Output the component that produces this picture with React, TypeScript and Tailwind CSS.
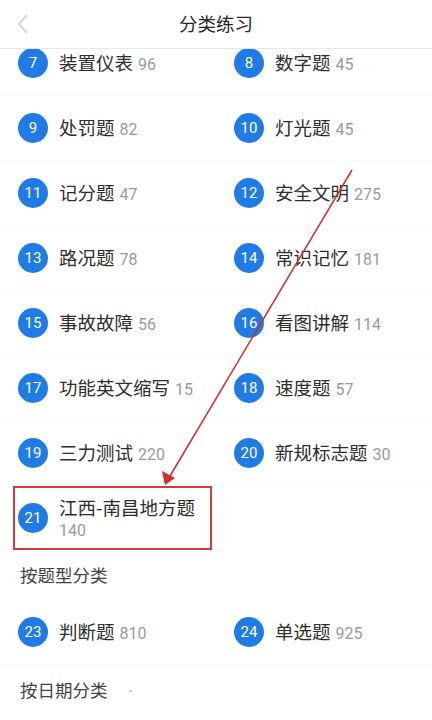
import React from 'react';

type Item = { n: number; name: string; count: number };

const rows: [Item, Item | null][] = [
  [{ n: 7, name: '装置仪表', count: 96 }, { n: 8, name: '数字题', count: 45 }],
  [{ n: 9, name: '处罚题', count: 82 }, { n: 10, name: '灯光题', count: 45 }],
  [{ n: 11, name: '记分题', count: 47 }, { n: 12, name: '安全文明', count: 275 }],
  [{ n: 13, name: '路况题', count: 78 }, { n: 14, name: '常识记忆', count: 181 }],
  [{ n: 15, name: '事故故障', count: 56 }, { n: 16, name: '看图讲解', count: 114 }],
  [{ n: 17, name: '功能英文缩写', count: 15 }, { n: 18, name: '速度题', count: 57 }],
  [{ n: 19, name: '三力测试', count: 220 }, { n: 20, name: '新规标志题', count: 30 }],
];

const Badge: React.FC<{ n: number }> = ({ n }) => (
  <div className="w-[30px] h-[30px] shrink-0 rounded-full bg-[#1f7be6] text-white flex items-center justify-center text-[15px] font-['Roboto',sans-serif]">
    {n}
  </div>
);

const Cell: React.FC<{ item: Item }> = ({ item }) => (
  <div className="flex items-center gap-[11px] pl-[18px]">
    <Badge n={item.n} />
    <div className="flex items-baseline gap-[5px]">
      <span className="text-[18.5px] text-[#2e2e2e]">{item.name}</span>
      <span className="text-[16px] text-[#9a9a9a] font-['Roboto',sans-serif]">{item.count}</span>
    </div>
  </div>
);

export default function App() {
  return (
    <div className="relative w-[432px] h-[720px] overflow-hidden bg-white font-['Noto_Sans_CJK_SC',sans-serif]">
      <header className="relative z-10 h-[49px] flex items-center justify-center bg-white border-b border-[#e8e8e8]">
        <svg className="absolute left-[17px] top-[14px]" width="12" height="20" viewBox="0 0 12 20">
          <path d="M10 1 L2 10 L10 19" fill="none" stroke="#cccccc" strokeWidth="1.5" />
        </svg>
        <h1 className="text-[18.5px] text-[#262626]">分类练习</h1>
      </header>

      <div className="-mt-[18px]">
        {rows.map(([l, r], i) => (
          <div key={i} className="grid grid-cols-2 h-[65px] items-center border-b border-[#fafafa]">
            <Cell item={l} />
            {r ? <Cell item={r} /> : <div />}
          </div>
        ))}

        <div className="h-[64px] flex">
          <div className="ml-[13px] w-[199px] border-2 border-[#d4393b] flex items-center gap-[11px] pl-[3px]">
            <Badge n={21} />
            <div className="flex flex-col leading-[23px] pt-[2px]">
              <span className="text-[18.5px] text-[#2e2e2e]">江西-南昌地方题</span>
              <span className="text-[16px] text-[#9a9a9a] font-['Roboto',sans-serif]">140</span>
            </div>
          </div>
        </div>

        <div className="h-[50px] flex items-center pl-[20px] text-[17.5px] text-[#444]">按题型分类</div>

        <div className="grid grid-cols-2 h-[65px] items-center border-b border-[#f8f8f8]">
          <Cell item={{ n: 23, name: '判断题', count: 810 }} />
          <Cell item={{ n: 24, name: '单选题', count: 925 }} />
        </div>

        <div className="h-[50px] flex items-center pl-[20px] text-[17.5px] text-[#444]">
          按日期分类
          <span className="ml-[18px] text-[#bbb] text-[10px]">·</span>
        </div>
      </div>

      <svg className="absolute left-0 top-0 pointer-events-none" width="432" height="720" viewBox="0 0 432 720">
        <line x1="352" y1="170" x2="170" y2="476" stroke="#d42a2a" strokeWidth="1.5" />
        <polygon points="165,485 162,471 175,478" fill="#d42a2a" />
      </svg>
    </div>
  );
}
